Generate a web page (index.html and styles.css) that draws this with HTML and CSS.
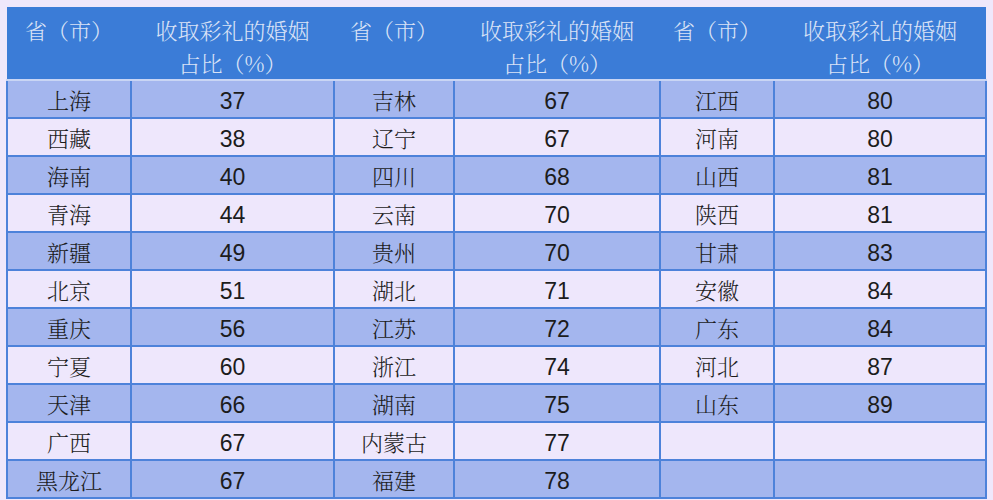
FILE: index.html
```html
<!DOCTYPE html>
<html lang="zh-CN">
<head>
<meta charset="utf-8">
<title>收取彩礼的婚姻占比</title>
<link rel="stylesheet" href="styles.css">
</head>
<body>
<table class="grid">
  <colgroup>
    <col class="c1"><col class="c2"><col class="c3"><col class="c4"><col class="c5"><col class="c6">
  </colgroup>
  <thead>
    <tr>
      <th>省（市）</th><th>收取彩礼的婚姻<br>占比（%）</th>
      <th>省（市）</th><th>收取彩礼的婚姻<br>占比（%）</th>
      <th>省（市）</th><th>收取彩礼的婚姻<br>占比（%）</th>
    </tr>
  </thead>
  <tbody>
    <tr><td class="name">上海</td><td class="num">37</td><td class="name">吉林</td><td class="num">67</td><td class="name">江西</td><td class="num">80</td></tr>
    <tr><td class="name">西藏</td><td class="num">38</td><td class="name">辽宁</td><td class="num">67</td><td class="name">河南</td><td class="num">80</td></tr>
    <tr><td class="name">海南</td><td class="num">40</td><td class="name">四川</td><td class="num">68</td><td class="name">山西</td><td class="num">81</td></tr>
    <tr><td class="name">青海</td><td class="num">44</td><td class="name">云南</td><td class="num">70</td><td class="name">陕西</td><td class="num">81</td></tr>
    <tr><td class="name">新疆</td><td class="num">49</td><td class="name">贵州</td><td class="num">70</td><td class="name">甘肃</td><td class="num">83</td></tr>
    <tr><td class="name">北京</td><td class="num">51</td><td class="name">湖北</td><td class="num">71</td><td class="name">安徽</td><td class="num">84</td></tr>
    <tr><td class="name">重庆</td><td class="num">56</td><td class="name">江苏</td><td class="num">72</td><td class="name">广东</td><td class="num">84</td></tr>
    <tr><td class="name">宁夏</td><td class="num">60</td><td class="name">浙江</td><td class="num">74</td><td class="name">河北</td><td class="num">87</td></tr>
    <tr><td class="name">天津</td><td class="num">66</td><td class="name">湖南</td><td class="num">75</td><td class="name">山东</td><td class="num">89</td></tr>
    <tr><td class="name">广西</td><td class="num">67</td><td class="name">内蒙古</td><td class="num">77</td><td class="name"></td><td class="num"></td></tr>
    <tr><td class="name">黑龙江</td><td class="num">67</td><td class="name">福建</td><td class="num">78</td><td class="name"></td><td class="num"></td></tr>
  </tbody>
</table>
</body>
</html>
```
FILE: styles.css
```css
html, body {
  margin: 0;
  padding: 0;
  background: #efe8fb;
}
body {
  padding: 7px 0 0 6px;
  height: 500px;
  box-sizing: border-box;
  overflow: hidden;
}
.grid {
  border-collapse: collapse;
  table-layout: fixed;
  width: 979px;
}
.c1 { width: 124px; }
.c2 { width: 203px; }
.c3 { width: 120px; }
.c4 { width: 206px; }
.c5 { width: 114px; }
.c6 { width: 212px; }

.grid th {
  background: #3b7cd7;
  color: #d9e2f6;
  font-family: "Noto Serif CJK SC", "Noto Sans CJK SC", serif;
  font-weight: 300;
  font-size: 22px;
  line-height: 33px;
  height: 71px;
  padding: 6px 0 0 0;
  box-sizing: border-box;
  vertical-align: top;
  text-align: center;
  border: none;
  border-bottom: 2px solid #c9d5f4;
}
.grid td {
  height: 38px;
  padding: 0;
  box-sizing: border-box;
  text-align: center;
  vertical-align: middle;
  border: 2px solid #4d82da;
  color: #1c1c1c;
}
.grid tbody tr:nth-child(odd) td { background: #a4b6ee; }
.grid tbody tr:nth-child(even) td { background: #eee7fc; }
.name {
  font-family: "Noto Serif CJK SC", "Noto Sans CJK SC", serif;
  font-weight: 300;
  font-size: 22px;
  color: #333;
}
.grid td.num {
  font-family: "Liberation Sans", Arial, sans-serif;
  font-size: 23px;
  padding-top: 5px;
}
```
